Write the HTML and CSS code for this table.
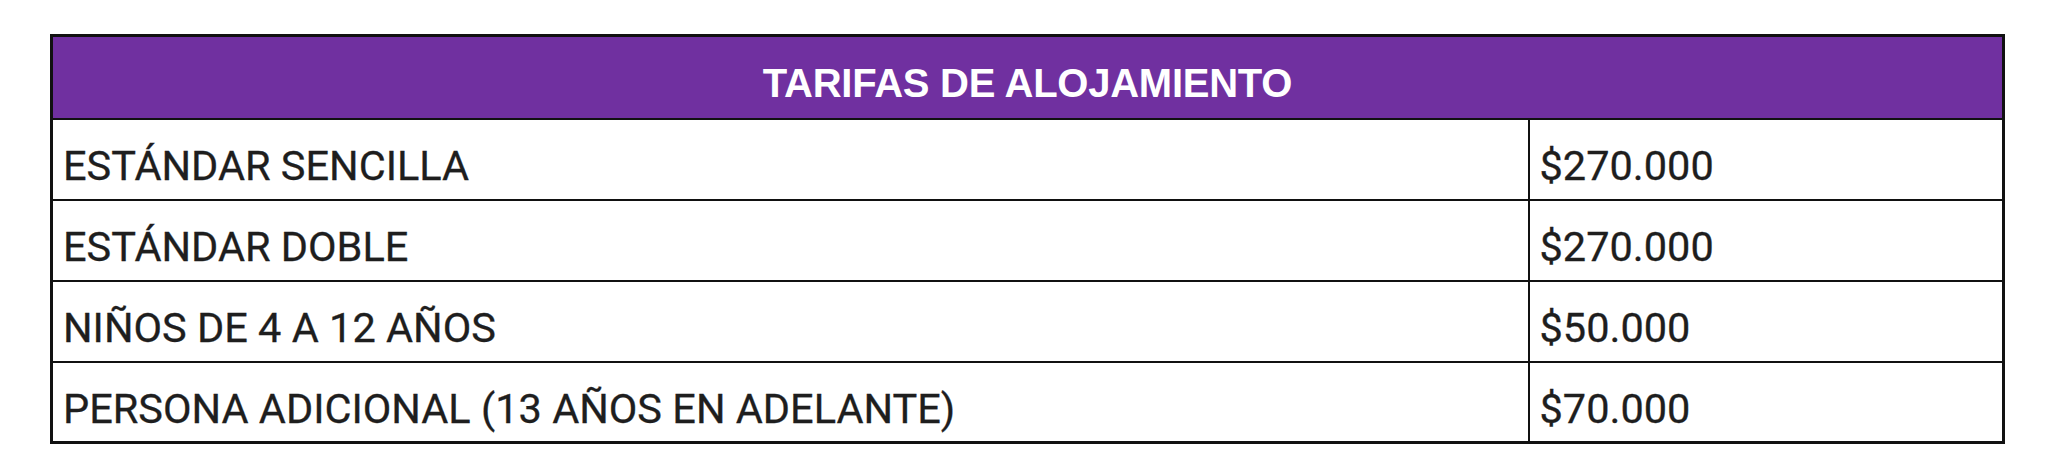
FILE: index.html
```html
<!DOCTYPE html>
<html lang="es">
<head>
<meta charset="utf-8">
<title>Tarifas de alojamiento</title>
<link rel="stylesheet" href="styles.css">
</head>
<body>
<table class="rates">
  <colgroup>
    <col class="col-name">
    <col class="col-price">
  </colgroup>
  <thead>
    <tr class="head-row">
      <th colspan="2" class="head-cell">TARIFAS DE ALOJAMIENTO</th>
    </tr>
  </thead>
  <tbody>
    <tr class="row"><td class="cell">ESTÁNDAR SENCILLA</td><td class="cell">$270.000</td></tr>
    <tr class="row"><td class="cell">ESTÁNDAR DOBLE</td><td class="cell">$270.000</td></tr>
    <tr class="row"><td class="cell">NIÑOS DE 4 A 12 AÑOS</td><td class="cell">$50.000</td></tr>
    <tr class="row"><td class="cell">PERSONA ADICIONAL (13 AÑOS EN ADELANTE)</td><td class="cell">$70.000</td></tr>
  </tbody>
</table>
</body>
</html>
```
FILE: styles.css
```css
html, body {
  margin: 0;
  padding: 0;
  background: #ffffff;
}

body {
  padding: 34px 0 0 50px;
}

.rates {
  border-collapse: collapse;
  width: 1952px;
  table-layout: fixed;
  border: 3px solid #111111;
}

.col-name {
  width: 1477px;
}

.col-price {
  width: 475px;
}

.head-row {
  height: 83px;
}

.head-cell {
  background: #7030a0;
  color: #ffffff;
  font-family: "Liberation Sans", Arial, sans-serif;
  font-weight: bold;
  font-size: 40px;
  letter-spacing: -0.25px;
  text-align: center;
  vertical-align: top;
  padding: 24px 0 0;
  border: 3px solid #111111;
  border-bottom-width: 2px;
}

.row {
  height: 81px;
}

.cell {
  font-family: Roboto, "Liberation Sans", sans-serif;
  font-size: 41.5px;
  font-weight: 400;
  color: #1e1e1e;
  -webkit-text-stroke: 0.3px #1e1e1e;
  vertical-align: top;
  padding: 21px 10px 0;
  border: 2px solid #111111;
  white-space: nowrap;
}
```
